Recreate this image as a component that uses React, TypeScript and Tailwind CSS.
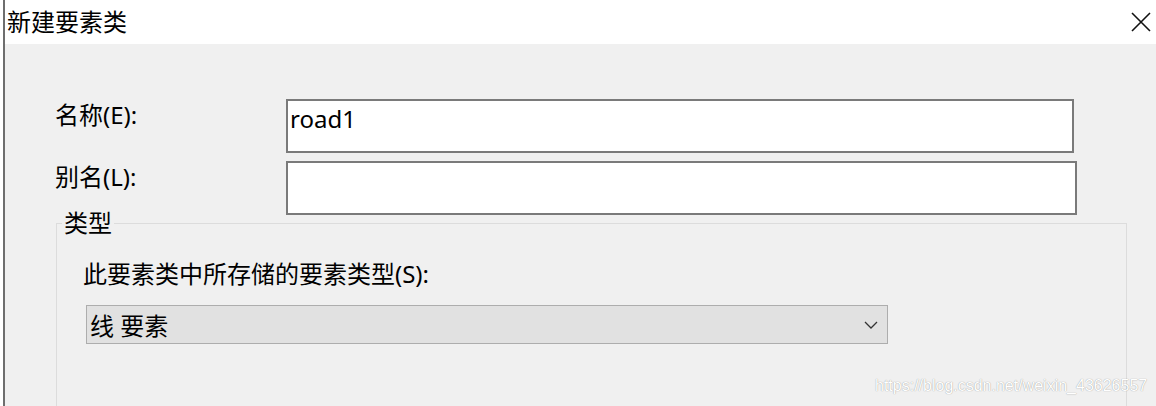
const cjk = { fontFamily: '"Noto Sans", "Noto Sans CJK SC", sans-serif' };

function CloseIcon() {
  return (
    <svg width="20" height="20" viewBox="0 0 20 20" aria-hidden>
      <path d="M1 1 L19 19 M19 1 L1 19" stroke="#111" strokeWidth="1.6" fill="none" />
    </svg>
  );
}

function Chevron() {
  return (
    <svg width="14" height="8" viewBox="0 0 14 8" aria-hidden>
      <path d="M1 1 L7 7 L13 1" stroke="#333" strokeWidth="1.3" fill="none" />
    </svg>
  );
}

export default function App() {
  return (
    <div className="relative flex h-[406px] w-[1156px] overflow-hidden bg-white text-black" style={cjk}>
      <div className="w-[3px] shrink-0 bg-white" />
      <div className="w-[2px] shrink-0 bg-[#6e6e6e]" />
      <div className="flex min-h-0 flex-1 flex-col">
        {/* title bar */}
        <div className="flex h-[44px] shrink-0 items-center justify-between bg-white pl-[2px] pr-[5px]">
          <span className="text-[24px] leading-[24px]">新建要素类</span>
          <CloseIcon />
        </div>

        {/* body */}
        <div className="min-h-0 flex-1 bg-[#f0f0f0] pl-[50px] pt-[55px]">
          <div className="flex items-start">
            <label className="w-[231px] pt-[4px] text-[24px] leading-[24px]">名称(E):</label>
            <div className="h-[54px] w-[788px] border-2 border-[#7a7a7a] bg-white pl-[2px] pt-[5px] text-[24px] leading-[26px]">
              road1
            </div>
          </div>
          <div className="mt-[8px] flex items-start">
            <label className="w-[231px] pt-[4px] text-[24px] leading-[24px]">别名(L):</label>
            <div className="h-[54px] w-[791px] border-2 border-[#7a7a7a] bg-white" />
          </div>

          <fieldset className="-mt-[4px] ml-[1px] h-[220px] w-[1071px] border border-[#dcdcdc]">
            <legend className="ml-[5px] px-[2px] text-[24px] leading-[24px]">类型</legend>
            <div className="pl-[26px] pt-[27px]">
              <div className="text-[24px] leading-[24px]">此要素类中所存储的要素类型(S):</div>
              <div className="ml-[3px] mt-[19px] flex h-[39px] w-[802px] items-center justify-between border border-[#adadad] bg-[#e1e1e1] pl-[3px] pr-[9px]">
                <span className="pt-[2px] text-[24px] leading-[24px]">线 要素</span>
                <Chevron />
              </div>
            </div>
          </fieldset>
        </div>
      </div>

      <div
        className="absolute left-[875px] top-[376px] text-[16px] leading-[20px] text-white"
        style={{ fontFamily: '"Liberation Sans", Arial, sans-serif', textShadow: '0 0 1px rgba(0,0,0,0.45)' }}
      >
        https://blog.csdn.net/weixin_43626557
      </div>
    </div>
  );
}
